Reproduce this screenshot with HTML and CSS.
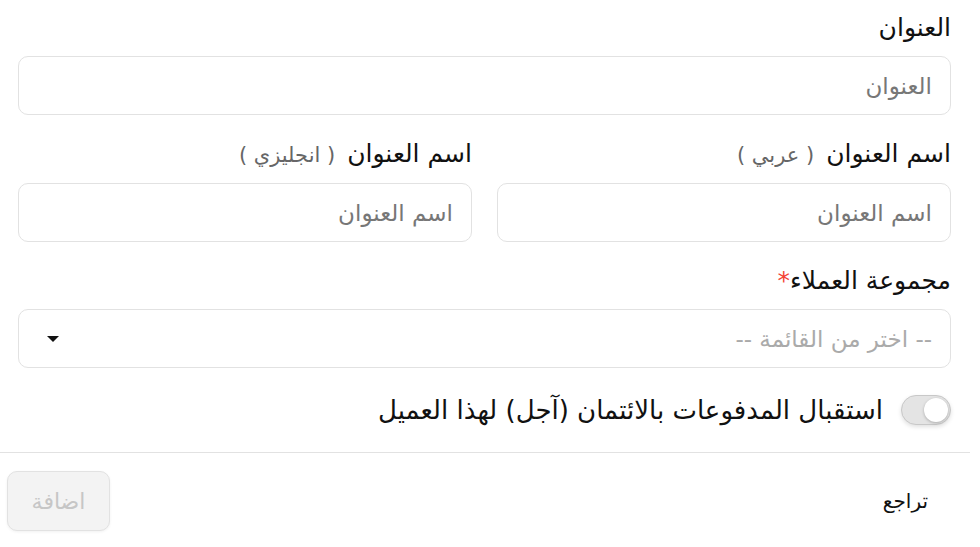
FILE: index.html
```html
<!DOCTYPE html>
<html lang="ar" dir="rtl">
<head>
<meta charset="utf-8">
<link rel="stylesheet" href="styles.css">
</head>
<body>
<form class="form">
  <div class="fields">
    <div class="field">
      <label class="label">العنوان</label>
      <div class="input"><span class="ph">العنوان</span></div>
    </div>
    <div class="row">
      <div class="field">
        <label class="label">اسم العنوان <span class="hint">( عربي )</span></label>
        <div class="input"><span class="ph">اسم العنوان</span></div>
      </div>
      <div class="field">
        <label class="label">اسم العنوان <span class="hint">( انجليزي )</span></label>
        <div class="input"><span class="ph">اسم العنوان</span></div>
      </div>
    </div>
    <div class="field">
      <label class="label">مجموعة العملاء<span class="req">*</span></label>
      <div class="input select"><span class="ph light">-- اختر من القائمة --</span><span class="caret"></span></div>
    </div>
    <div class="switch-row">
      <span class="switch"><span class="knob"></span></span>
      <span class="switch-label">استقبال المدفوعات بالائتمان (آجل) لهذا العميل</span>
    </div>
  </div>
  <div class="footer">
    <span class="cancel">تراجع</span>
    <span class="submit">اضافة</span>
  </div>
</form>
</body>
</html>
```
FILE: styles.css
```css
* { box-sizing: border-box; }
html, body { margin: 0; background: #fff; }
body {
  font-family: "DejaVu Sans", "Noto Sans", sans-serif;
  color: #1a1a1a;
  width: 980px;
  height: 547px;
  overflow: hidden;
}
.form { width: 970px; margin-right: 10px; margin-left: 0; }
.fields {
  padding: 13px 19px 0 18px;
  display: flex;
  flex-direction: column;
}
.field { display: flex; flex-direction: column; }
.label {
  font-size: 25px;
  line-height: 30px;
  margin-bottom: 13px;
  color: #111;
}
.hint { font-size: 21px; color: #666; margin-right: 4px; }
.req { color: #f44336; }
.input {
  height: 59px;
  border: 1px solid #e2e2e2;
  border-radius: 10px;
  display: flex;
  align-items: center;
  padding: 0 18px;
  margin-bottom: 24px;
}
.ph { font-size: 23px; color: #777; }
.ph.light { color: #aaa; }
.row {
  display: grid;
  grid-template-columns: 1fr 1fr;
  gap: 25px;
}
.select { justify-content: space-between; padding-left: 28px; }
.caret {
  width: 0; height: 0;
  border-left: 6px solid transparent;
  border-right: 6px solid transparent;
  border-top: 6px solid #111;
}
.switch-row {
  display: flex;
  align-items: center;
  gap: 18px;
  height: 36px;
}
.switch {
  width: 50px; height: 30px;
  border-radius: 15px;
  background: #e4e4e4;
  border: 1px solid #c8c8c8;
  position: relative;
  box-shadow: 0 2px 4px rgba(0,0,0,0.12);
}
.knob {
  position: absolute;
  right: 2px; top: 2px;
  width: 24px; height: 24px;
  border-radius: 50%;
  background: #fff;
  box-shadow: 0 1px 3px rgba(0,0,0,0.25);
}
.switch-label { font-size: 26px; color: #111; }
.footer {
  margin-top: 24px;
  border-top: 1px solid #e2e2e2;
  display: flex;
  justify-content: space-between;
  align-items: center;
  padding: 18px 42px 0 7px;
}
.cancel { font-size: 20px; color: #111; }
.submit {
  width: 103px; height: 60px;
  display: flex; align-items: center; justify-content: center;
  background: #f3f3f3;
  border: 1px solid #e2e2e2;
  border-radius: 10px;
  color: #c6c6c6;
  font-size: 22px;
  box-shadow: 0 1px 3px rgba(0,0,0,0.06);
}
```
